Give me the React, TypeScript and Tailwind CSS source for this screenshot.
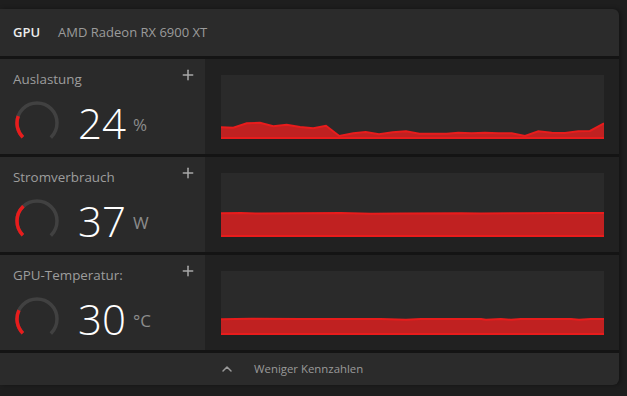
import { Plus, ChevronUp } from "lucide-react";

type Metric = {
  label: string;
  value: string;
  unit: string;
  frac: number;
  points: [number, number][];
};

const metrics: Metric[] = [
  {
    label: "Auslastung",
    value: "24",
    unit: "%",
    frac: 0.24,
    points: [
      [0, 52.3], [12.3, 52.7], [25.7, 48.3], [39, 47.7], [52.3, 51.3], [65.7, 49.7],
      [79, 52], [92.3, 53.3], [105, 50.7], [118.3, 61], [132.3, 58.3], [144.7, 57],
      [158, 59.3], [171.7, 57.3], [185, 56.3], [198.3, 58.7], [212.3, 58.7], [225.7, 58.7],
      [237.3, 57.7], [250.7, 58.3], [264, 57.7], [277.3, 58.3], [290.7, 58.3], [304, 61],
      [317.3, 56.3], [330.7, 57.7], [344, 58], [357.3, 56.3], [369, 56], [383, 48.3],
    ],
  },
  {
    label: "Stromverbrauch",
    value: "37",
    unit: "W",
    frac: 0.34,
    points: [
      [0, 40.2], [20, 40], [40, 40.6], [80, 40.3], [120, 40.1], [150, 40.7], [180, 40.5],
      [240, 40.2], [260, 40.6], [300, 40.2], [340, 40.1], [383, 40.1],
    ],
  },
  {
    label: "GPU-Temperatur:",
    value: "30",
    unit: "°C",
    frac: 0.26,
    points: [
      [0, 48.3], [30, 47.8], [80, 48], [160, 48], [185, 48.8], [200, 48], [260, 48],
      [265, 48.7], [280, 48], [290, 48.7], [300, 48], [350, 48], [358, 48.7], [370, 48], [383, 48],
    ],
  },
];

function Gauge({ frac }: { frac: number }) {
  const c = 2 * Math.PI * 20;
  const arc = c * 0.75;
  return (
    <svg width="44" height="44" viewBox="0 0 44 44">
      <g transform="rotate(135 22 22)">
        <circle cx="22" cy="22" r="20" fill="none" stroke="#414141" strokeWidth="3.5" strokeDasharray={`${arc} ${c}`} />
        <circle cx="22" cy="22" r="20" fill="none" stroke="#e81c1c" strokeWidth="3.5" strokeDasharray={`${arc * frac} ${c}`} />
      </g>
    </svg>
  );
}

function Chart({ points }: { points: [number, number][] }) {
  const line = points.map(([x, y]) => `${x},${y}`).join(" ");
  const area = `0,64 ${line} 383,64`;
  return (
    <svg width="383" height="64" viewBox="0 0 383 64" className="block">
      <polygon points={area} fill="#c02121" />
      <polyline points={line} fill="none" stroke="#e81c1c" strokeWidth="2" />
      <line x1="0" y1="63" x2="383" y2="63" stroke="#e81c1c" strokeWidth="2" />
    </svg>
  );
}

export default function App() {
  return (
    <div
      className="w-[627px] h-[396px] bg-[#1e1e1e] pt-[9px] overflow-hidden"
      style={{ fontFamily: '"Open Sans", "Noto Sans", sans-serif' }}
    >
      <div className="w-[619px] flex flex-col gap-[3px] bg-[#141414] rounded-r-md shadow-[2px_0_4px_rgba(0,0,0,0.35)]">
        {/* header */}
        <div className="h-[47px] bg-[#2b2b2b] rounded-tr-md flex items-center pl-[13px] gap-[18px] text-[13px]">
          <span className="font-semibold text-[#ececec]">GPU</span>
          <span className="text-[#9b9b9b]">AMD Radeon RX 6900 XT</span>
        </div>

        {metrics.map((m) => (
          <div key={m.label} className="h-[95px] flex">
            <div className="w-[205px] bg-[#2a2a2a] pl-[13px] pr-[9px] pt-[12px] flex flex-col">
              <div className="flex items-center justify-between h-[16px]">
                <span className="text-[13.4px] text-[#9d9d9d]">{m.label}</span>
                <Plus size={16} strokeWidth={2.25} className="text-[#a8a8a8] -mt-[8px]" />
              </div>
              <div className="flex items-center mt-[14px] ml-[2px]">
                <Gauge frac={m.frac} />
                <span className="ml-[19px] text-[42px] leading-none font-light text-white">{m.value}</span>
                <span className="ml-[7px] mt-[3px] text-[17px] text-[#8c8c8c]">{m.unit}</span>
              </div>
            </div>
            <div className="flex-1 bg-[#212121] pl-[16px] pt-[16px]">
              <div className="w-[383px] h-[64px] bg-[#2a2a2a]">
                <Chart points={m.points} />
              </div>
            </div>
          </div>
        ))}

        {/* footer */}
        <div className="h-[32px] bg-[#2b2b2b] rounded-br-md flex items-center pl-[219px] gap-[19px]">
          <ChevronUp size={16} strokeWidth={2.25} className="text-[#9a9a9a]" />
          <span className="text-[11.4px] text-[#9a9a9a]">Weniger Kennzahlen</span>
        </div>
      </div>
    </div>
  );
}
